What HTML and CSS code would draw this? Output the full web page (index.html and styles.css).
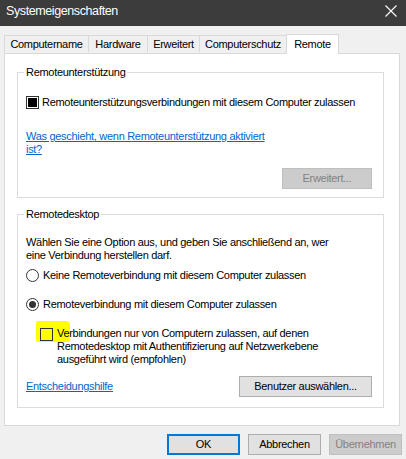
FILE: index.html
```html
<!DOCTYPE html>
<html lang="de">
<head>
<meta charset="utf-8">
<title>Systemeigenschaften</title>
<link rel="stylesheet" href="styles.css">
</head>
<body>
<div class="window">
  <div class="titlebar">
    <span class="title">Systemeigenschaften</span>
    <svg class="close" width="12" height="12" viewBox="0 0 12 12"><path d="M0.5 0.5 L11.5 11.5 M11.5 0.5 L0.5 11.5" stroke="#ffffff" stroke-width="1.1" fill="none"/></svg>
  </div>
  <div class="tabstrip">
    <div class="tab t1">Computername</div>
    <div class="tab t2">Hardware</div>
    <div class="tab t3">Erweitert</div>
    <div class="tab t4">Computerschutz</div>
    <div class="tab t5 active">Remote</div>
  </div>
  <div class="panel">
    <div class="group g1">
      <div class="legend">Remoteunterstützung</div>
      <div class="row check-row">
        <span class="checkbox mixed"><span class="fill"></span></span>
        <span>Remoteunterstützungsverbindungen mit diesem Computer zulassen</span>
      </div>
      <a class="link link1" href="#">Was geschieht, wenn Remoteunterstützung aktiviert<br>ist?</a>
      <div class="btn-row">
        <span class="btn disabled wide1">Erweitert...</span>
      </div>
    </div>
    <div class="group g2">
      <div class="legend">Remotedesktop</div>
      <p class="intro">Wählen Sie eine Option aus, und geben Sie anschließend an, wer<br>eine Verbindung herstellen darf.</p>
      <div class="row radio-row r1">
        <span class="radio"></span>
        <span>Keine Remoteverbindung mit diesem Computer zulassen</span>
      </div>
      <div class="row radio-row r2">
        <span class="radio checked"><span class="dot"></span></span>
        <span>Remoteverbindung mit diesem Computer zulassen</span>
      </div>
      <div class="row nla-row">
        <span class="highlight"></span>
        <span class="checkbox empty"></span>
        <span class="nla-text">Verbindungen nur von Computern zulassen, auf denen<br>Remotedesktop mit Authentifizierung auf Netzwerkebene<br>ausgeführt wird (empfohlen)</span>
      </div>
      <div class="bottom-row">
        <a class="link" href="#">Entscheidungshilfe</a>
        <span class="btn wide2">Benutzer auswählen...</span>
      </div>
    </div>
  </div>
  <div class="dialog-buttons">
    <span class="btn default">OK</span>
    <span class="btn">Abbrechen</span>
    <span class="btn disabled">Übernehmen</span>
  </div>
</div>
</body>
</html>
```

FILE: styles.css
```css
* { box-sizing: border-box; }
html, body { margin: 0; padding: 0; }
body {
  background: #f0f0f0;
  font-family: "Liberation Sans", Arial, sans-serif;
  font-size: 11px;
  letter-spacing: -0.3px;
  color: #000;
  width: 406px;
  height: 459px;
  overflow: hidden;
}
.window { width: 406px; height: 459px; }

.titlebar {
  height: 26px;
  background: #3c3c3c;
  color: #fff;
  display: flex;
  align-items: center;
  justify-content: space-between;
  padding: 0 9px 4px 6px;
}
.title { font-size: 12.5px; letter-spacing: -0.4px; }
.close { display: block; }

.tabstrip {
  margin-top: 7px;
  height: 20px;
  display: flex;
  align-items: flex-end;
  padding-left: 4px;
}
.tab {
  height: 17px;
  margin-bottom: 1px;
  border: 1px solid #d9d9d9;
  border-bottom: none;
  background: #f0f0f0;
  text-align: center;
  line-height: 16px;
  margin-left: -1px;
}
.tab.t1 { margin-left: 0; width: 85px; }
.tab.t2 { width: 60px; }
.tab.t3 { width: 53px; }
.tab.t4 { width: 88px; }
.tab.t5 { width: 53px; }
.tab.active {
  height: 20px;
  margin-bottom: -1px;
  background: #fff;
  position: relative;
  z-index: 1;
  line-height: 18px;
  padding-bottom: 2px;
}

.panel {
  margin: 0 6px 0 4px;
  height: 373px;
  border: 1px solid #d9d9d9;
  background: #fff;
  padding: 18px 15px 0 12px;
}

.group {
  border: 1px solid #dcdcdc;
  padding: 0 11px 0 8px;
}
.g1 { height: 126px; }
.g2 { height: 194px; margin-top: 16px; }
.legend {
  display: table;
  background: #fff;
  margin: -7px 0 0 -2px;
  padding: 0 2px;
  line-height: 13px;
}

.row { display: flex; align-items: center; line-height: 13px; }
.check-row { margin-top: 17px; gap: 3px; }

.checkbox {
  width: 13px;
  height: 13px;
  border: 1px solid #333;
  background: #fff;
  flex: none;
  display: block;
}
.checkbox.mixed { padding: 1px; }
.checkbox.mixed .fill { display: block; width: 9px; height: 9px; background: #000; }

.link {
  color: #0066cc;
  text-decoration: underline;
  line-height: 13px;
}
.link1 { display: block; margin-top: 21px; }

.btn-row { display: flex; justify-content: flex-end; margin-top: 12px; }

.btn {
  display: flex;
  align-items: center;
  justify-content: center;
  height: 21px;
  width: 73px;
  background: #e1e1e1;
  border: 1px solid #adadad;
  color: #000;
  padding-bottom: 1px;
}
.btn.disabled { background: #cccccc; border-color: #bfbfbf; color: #838383; }
.btn.default { border: 2px solid #0078d7; }
.btn.wide1 { width: 90px; }
.btn.wide2 { width: 133px; }

.intro { margin: 15px 0 0 0; line-height: 13px; }

.radio-row { gap: 4px; }
.r1 { margin-top: 7px; }
.r2 { margin-top: 16px; }
.radio {
  width: 13px;
  height: 13px;
  border: 1px solid #333;
  border-radius: 50%;
  background: #fff;
  flex: none;
  display: flex;
  align-items: center;
  justify-content: center;
}
.radio .dot { width: 7px; height: 7px; border-radius: 50%; background: #333; }

.nla-row {
  margin-top: 16px;
  margin-left: 14px;
  align-items: flex-start;
  gap: 4px;
  position: relative;
}
.nla-row .checkbox { margin-top: 1px; position: relative; z-index: 1; background: transparent; }
.nla-text { position: relative; z-index: 1; }
.highlight {
  position: absolute;
  left: -4px;
  top: -6px;
  width: 34px;
  height: 21px;
  background: #ffff00;
  border-radius: 2px 4px 1px 2px;
  z-index: 0;
}

.bottom-row {
  margin-top: 10px;
  display: flex;
  align-items: center;
  justify-content: space-between;
}

.dialog-buttons {
  margin-top: 8px;
  display: flex;
  justify-content: flex-end;
  gap: 8px;
  padding-right: 4px;
}
```
